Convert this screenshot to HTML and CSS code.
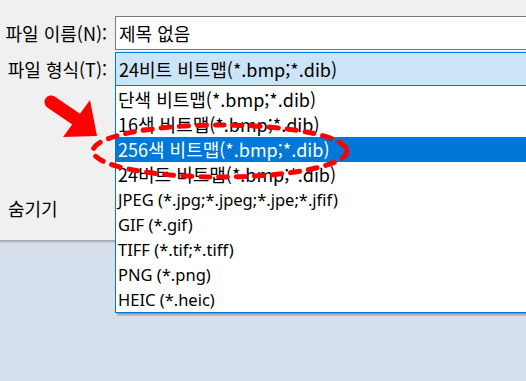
FILE: index.html
```html
<!DOCTYPE html>
<html lang="ko">
<head>
<meta charset="utf-8">
<link rel="stylesheet" href="styles.css">
</head>
<body>
<div class="dialog">
  <div class="row">
    <span class="lbl">파일 이름(N):</span>
    <div class="field input">제목 없음</div>
  </div>
  <div class="row">
    <span class="lbl">파일 형식(T):</span>
    <div class="field combo">24비트 비트맵(*.bmp;*.dib)</div>
  </div>
  <div class="hide">숨기기</div>
</div>
<ul class="list">
  <li>단색 비트맵(*.bmp;*.dib)</li>
  <li>16색 비트맵(*.bmp;*.dib)</li>
  <li class="sel">256색 비트맵(*.bmp;*.dib)</li>
  <li>24비트 비트맵(*.bmp;*.dib)</li>
  <li class="en">JPEG (*.jpg;*.jpeg;*.jpe;*.jfif)</li>
  <li class="en">GIF (*.gif)</li>
  <li class="en">TIFF (*.tif;*.tiff)</li>
  <li class="en">PNG (*.png)</li>
  <li class="en">HEIC (*.heic)</li>
</ul>
<svg class="annot" width="526" height="381" viewBox="0 0 526 381">
  <line x1="51" y1="102" x2="76" y2="119" stroke="#ff0000" stroke-width="13" stroke-linecap="round"/>
  <polygon points="63,137 90,100 97,136" fill="#ff0000"/>
  <ellipse cx="220" cy="151" rx="127" ry="26" fill="none" stroke="#ff0000" stroke-width="5" stroke-linecap="round" stroke-dasharray="9 9"/>
</svg>
</body>
</html>
```

FILE: styles.css
```css
html, body {
  margin: 0;
  padding: 0;
}
body {
  width: 526px;
  height: 381px;
  overflow: hidden;
  background: #d6dfec;
  position: relative;
  font-family: "Noto Sans CJK KR", "Noto Sans", sans-serif;
  font-size: 18px;
  color: #000;
}
.dialog {
  height: 241px;
  background: #f0f0f0;
  border-bottom: 1px solid #a9a9a9;
  box-shadow: 0 1px 2px rgba(0,0,0,0.25);
  padding-top: 16px;
  box-sizing: border-box;
  display: flex;
  flex-direction: column;
  gap: 2px;
}
.row {
  display: flex;
  align-items: center;
  height: 34px;
}
.lbl {
  width: 107px;
  padding-right: 8px;
  text-align: right;
  flex: none;
  white-space: nowrap;
  line-height: 34px;
}
.field {
  flex: 1;
  height: 34px;
  box-sizing: border-box;
  display: flex;
  align-items: center;
  padding-left: 3px;
  margin-right: -10px;
  white-space: nowrap;
}
.input {
  background: #fff;
  border: 1px solid #7a7a7a;
}
.combo {
  background: #cce4f7;
  border: 1px solid #0078d7;
}
.hide {
  margin-top: 108px;
  padding-left: 8px;
  line-height: 25px;
}
.list {
  position: absolute;
  top: 86px;
  left: 115px;
  width: 430px;
  margin: 0;
  padding: 1px 0 0;
  list-style: none;
  background: #fff;
  border: 1px solid #0078d7;
  border-top: none;
  box-shadow: 2px 2px 2px rgba(0,0,0,0.35);
}
.list li {
  height: 25px;
  line-height: 25px;
  padding-left: 2px;
  white-space: nowrap;
}
.list li.en {
  font-family: "Noto Sans", sans-serif;
  font-size: 16.5px;
}
.list li.sel {
  background: #0078d7;
  color: #fff;
}
.annot {
  position: absolute;
  left: 0;
  top: 0;
  pointer-events: none;
}
```
